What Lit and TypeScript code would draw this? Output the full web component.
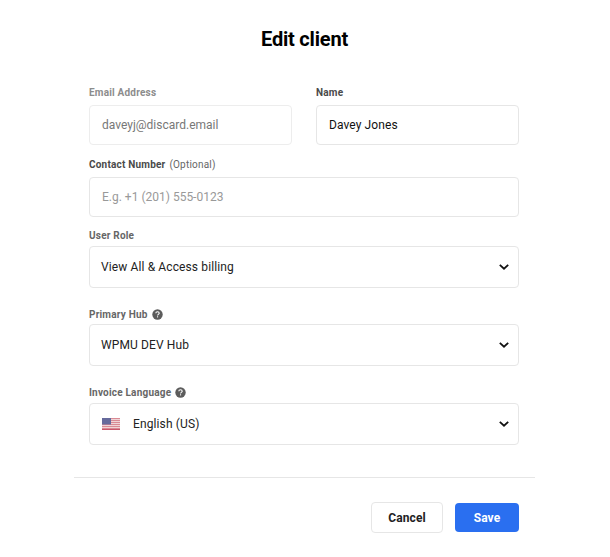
import { LitElement, html, css, svg } from "lit";
import { customElement } from "lit/decorators.js";

const chevron = html`<svg class="chev" width="10" height="6" viewBox="0 0 10 6" aria-hidden="true"><path d="M.8.9 5 4.7 9.2.9" fill="none" stroke="#111" stroke-width="1.8"/></svg>`;
const help = html`<svg class="help" width="11" height="11" viewBox="0 0 11 11" aria-hidden="true"><circle cx="5.5" cy="5.5" r="5.2" fill="#5c5c5c"/><path d="M3.8 4.3c0-1 .8-1.6 1.7-1.6s1.7.6 1.7 1.5c0 1.2-1.6 1.2-1.6 2.3" fill="none" stroke="#fff" stroke-width="1.1"/><rect x="5" y="7.3" width="1.1" height="1.1" fill="#fff"/></svg>`;
const stripes = [0, 2, 4, 6, 8, 10].map((y) => svg`<rect x="0" y="${y}" width="18" height="1" fill="#d98a94"/>`);
const flag = html`<svg class="flag" width="18" height="12" viewBox="0 0 18 12" aria-hidden="true"><rect width="18" height="12" fill="#f0d4d6"/>${stripes}<rect y="11" width="18" height="1" fill="#c9566a"/><rect width="9" height="6.5" fill="#666a9c"/></svg>`;

@customElement("app-root")
export class AppRoot extends LitElement {
  static styles = css`
    :host { display: block; width: 610px; height: 557px; background: #fff; font-family: Roboto, "Liberation Sans", sans-serif; color: #111; overflow: hidden; }
    .title { margin: 0; padding: 27px 1px 0 0; height: 24px; line-height: 24px; text-align: center; font-size: 20px; font-weight: 700; letter-spacing: -0.2px; color: #000; box-sizing: content-box; }
    form { display: flex; flex-direction: column; padding: 35px 91px 0 89px; }
    .row { display: grid; grid-template-columns: 203px 203px; column-gap: 24px; }
    .label { display: flex; align-items: center; gap: 4px; height: 13px; font-size: 10px; font-weight: 700; letter-spacing: 0.2px; color: #666; white-space: nowrap; }
    .label.muted { color: #8c8c8c; }
    .label.dark { color: #4a4a4a; }
    .opt { font-weight: 400; color: #666; letter-spacing: 0.2px; }
    .box { box-sizing: border-box; display: flex; align-items: center; border: 1px solid #e6e6e6; border-radius: 4px; font-size: 12px; background: #fff; }
    .input { height: 40px; margin-top: 6px; padding: 0 12px; }
    .input.name { letter-spacing: 0.1px; }
    .input.ro { color: #777; border-color: #ededed; }
    .input.ph { color: #999; }
    .select { height: 42px; padding: 0 9px 0 11px; justify-content: space-between; color: #222; letter-spacing: 0.12px; }
    .lang { display: flex; align-items: center; gap: 13px; margin-left: 1px; }
    .f2 { margin-top: 13px; }
    .f3 { margin-top: 12px; }
    .f3 .select { margin-top: 4px; }
    .f4 { margin-top: 20px; }
    .f4 .select { margin-top: 3px; }
    .f5 { margin-top: 20px; }
    .f5 .select { margin-top: 4px; }
    hr { margin: 32px 75px 0 74px; border: 0; border-top: 1px solid #e6e6e6; height: 0; }
    .actions { display: flex; justify-content: flex-end; align-items: center; gap: 12px; padding: 24px 91px 0 0; }
    button { box-sizing: border-box; font: 700 12px Roboto, "Liberation Sans", sans-serif; border-radius: 4px; letter-spacing: 0.1px; padding: 0; }
    .cancel { width: 72px; height: 31px; background: #fff; border: 1px solid #e6e6e6; color: #222; }
    .save { width: 64px; height: 29px; background: #2a6ff0; border: 0; color: #fff; }
    svg { display: block; flex: none; }
  `;

  render() {
    return html`
      <h1 class="title">Edit client</h1>
      <form>
        <div class="row">
          <div>
            <div class="label muted">Email Address</div>
            <div class="box input ro">daveyj@discard.email</div>
          </div>
          <div>
            <div class="label dark">Name</div>
            <div class="box input name">Davey Jones</div>
          </div>
        </div>
        <div class="f2">
          <div class="label dark">Contact Number <span class="opt">(Optional)</span></div>
          <div class="box input ph">E.g. +1 (201) 555-0123</div>
        </div>
        <div class="f3">
          <div class="label">User Role</div>
          <div class="box select"><span>View All &amp; Access billing</span>${chevron}</div>
        </div>
        <div class="f4">
          <div class="label">Primary Hub ${help}</div>
          <div class="box select"><span>WPMU DEV Hub</span>${chevron}</div>
        </div>
        <div class="f5">
          <div class="label">Invoice Language ${help}</div>
          <div class="box select"><span class="lang">${flag}<span>English (US)</span></span>${chevron}</div>
        </div>
      </form>
      <hr />
      <div class="actions">
        <button class="cancel" type="button">Cancel</button>
        <button class="save" type="button">Save</button>
      </div>
    `;
  }
}
